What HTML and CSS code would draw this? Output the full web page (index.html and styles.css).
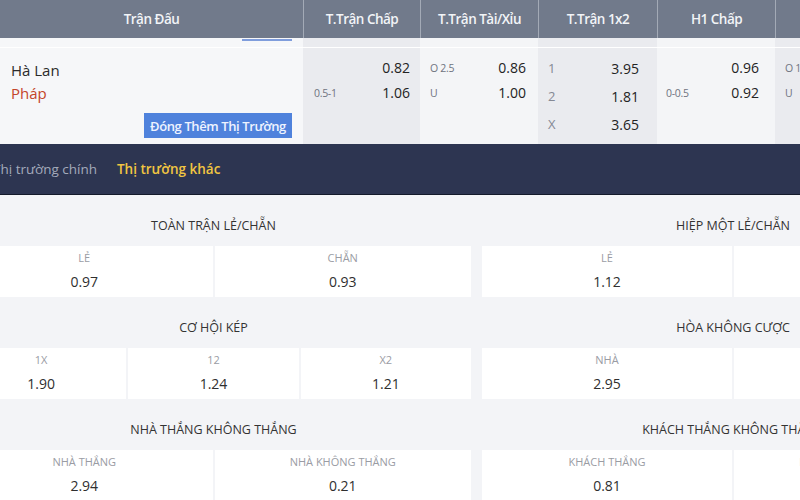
FILE: index.html
```html
<!DOCTYPE html>
<html lang="vi">
<head>
<meta charset="utf-8">
<title>Thị trường</title>
<link rel="stylesheet" href="styles.css">
</head>
<body>
<div class="page">
  <div class="table">
    <div class="grid hrow">
      <div class="hcell">Trận Đấu</div>
      <div class="hcell sep">T.Trận Chấp</div>
      <div class="hcell sep">T.Trận Tài/Xỉu</div>
      <div class="hcell sep">T.Trận 1x2</div>
      <div class="hcell sep">H1 Chấp</div>
      <div class="hcell sep">H1 Tài/Xỉu</div>
    </div>
    <div class="grid strip">
      <div class="col-a strip-first"><span class="uline"></span></div>
      <div class="col-b"></div>
      <div class="col-c"></div>
      <div class="col-b"></div>
      <div class="col-c"></div>
      <div class="col-b"></div>
    </div>
    <div class="grid mrow">
      <div class="col-a match">
        <div class="team home">Hà Lan</div>
        <div class="team away">Pháp</div>
        <div class="btnrow"><span class="more">Đóng Thêm Thị Trường</span></div>
      </div>
      <div class="col-b odds hdp">
        <div class="line"><span class="lbl"></span><span class="val">0.82</span></div>
        <div class="line"><span class="lbl">0.5-1</span><span class="val">1.06</span></div>
      </div>
      <div class="col-c odds ou">
        <div class="line"><span class="lbl">O 2.5</span><span class="val">0.86</span></div>
        <div class="line"><span class="lbl">U</span><span class="val">1.00</span></div>
      </div>
      <div class="col-b odds x12">
        <div class="line"><span class="lbl big">1</span><span class="val">3.95</span></div>
        <div class="line"><span class="lbl big">2</span><span class="val">1.81</span></div>
        <div class="line"><span class="lbl big">X</span><span class="val">3.65</span></div>
      </div>
      <div class="col-c odds h1">
        <div class="line"><span class="lbl"></span><span class="val">0.96</span></div>
        <div class="line"><span class="lbl">0-0.5</span><span class="val">0.92</span></div>
      </div>
      <div class="col-b odds h1ou">
        <div class="line"><span class="lbl">O 1</span><span class="val"></span></div>
        <div class="line"><span class="lbl">U</span><span class="val"></span></div>
      </div>
    </div>
  </div>

  <div class="lower">
    <div class="tabs">
      <span class="tab">Thị trường chính</span>
      <span class="tab active">Thị trường khác</span>
    </div>
    <div class="markets">
      <div class="market">
        <div class="mtitle">TOÀN TRẬN LẺ/CHẴN</div>
        <div class="cells two">
          <div class="cell"><div class="clbl">LẺ</div><div class="cval">0.97</div></div>
          <div class="cell"><div class="clbl">CHẴN</div><div class="cval">0.93</div></div>
        </div>
      </div>
      <div class="market">
        <div class="mtitle">HIỆP MỘT LẺ/CHẴN</div>
        <div class="cells two">
          <div class="cell"><div class="clbl">LẺ</div><div class="cval">1.12</div></div>
          <div class="cell"><div class="clbl">CHẴN</div><div class="cval"></div></div>
        </div>
      </div>
      <div class="market">
        <div class="mtitle">CƠ HỘI KÉP</div>
        <div class="cells three">
          <div class="cell"><div class="clbl">1X</div><div class="cval">1.90</div></div>
          <div class="cell"><div class="clbl">12</div><div class="cval">1.24</div></div>
          <div class="cell"><div class="clbl">X2</div><div class="cval">1.21</div></div>
        </div>
      </div>
      <div class="market">
        <div class="mtitle">HÒA KHÔNG CƯỢC</div>
        <div class="cells two">
          <div class="cell"><div class="clbl">NHÀ</div><div class="cval">2.95</div></div>
          <div class="cell"><div class="clbl">KHÁCH</div><div class="cval"></div></div>
        </div>
      </div>
      <div class="market">
        <div class="mtitle">NHÀ THẮNG KHÔNG THẮNG</div>
        <div class="cells two">
          <div class="cell"><div class="clbl">NHÀ THẮNG</div><div class="cval">2.94</div></div>
          <div class="cell"><div class="clbl">NHÀ KHÔNG THẮNG</div><div class="cval">0.21</div></div>
        </div>
      </div>
      <div class="market">
        <div class="mtitle">KHÁCH THẮNG KHÔNG THẮNG</div>
        <div class="cells two">
          <div class="cell"><div class="clbl">KHÁCH THẮNG</div><div class="cval">0.81</div></div>
          <div class="cell"><div class="clbl">KHÁCH KHÔNG THẮNG</div><div class="cval"></div></div>
        </div>
      </div>
    </div>
  </div>
</div>
</body>
</html>
```

FILE: styles.css
```css
* { box-sizing: border-box; }
html, body { margin: 0; padding: 0; }
body {
  width: 800px;
  height: 500px;
  overflow: hidden;
  background: #f3f4f7;
  font-family: "Open Sans", "Liberation Sans", sans-serif;
  color: #2a2a2a;
}
.page { width: 800px; height: 500px; overflow: hidden; }

.table { width: 800px; overflow: hidden; }
.grid {
  display: grid;
  grid-template-columns: 303px 117px 118px 119px 118px 117px;
  width: 892px;
}

/* header */
.hrow { height: 38px; background: #717a8b; }
.hcell {
  display: flex;
  align-items: center;
  justify-content: center;
  color: #f2f4f7;
  font-size: 13.5px;
  font-weight: 600;
  letter-spacing: -0.5px;
}
.hcell.sep { border-left: 1px solid #a3aab6; }

/* cut-off previous row strip */
.strip { height: 9px; }
.strip-first { position: relative; }
.uline {
  position: absolute;
  left: 242px;
  top: 1px;
  width: 50px;
  height: 2px;
  background: #7f9ddc;
}

.col-a { background: #f6f7f9; }
.col-b { background: #eaebef; }
.col-c { background: #f4f5f7; }

/* main row */
.mrow { height: 97px; border-top: 1px solid #ffffff; }
.match { padding: 11px 11px 0 11px; }
.team { font-size: 15px; line-height: 23px; }
.home { color: #2b2b2b; }
.away { color: #c4452a; }
.btnrow { display: flex; justify-content: flex-end; margin-top: 8px; }
.more {
  display: flex;
  align-items: center;
  justify-content: center;
  width: 148px;
  height: 25px;
  background: #4f82dc;
  color: #eef3ff;
  font-size: 13px;
  font-weight: 600;
  letter-spacing: -0.4px;
}

.odds { padding-top: 7px; }
.line {
  display: flex;
  justify-content: space-between;
  align-items: center;
  height: 25px;
}
.lbl { font-size: 10.5px; color: #6f7380; letter-spacing: -0.3px; }
.lbl.big { font-size: 13px; color: #858994; }
.val { font-size: 14px; color: #232323; }

.hdp { padding-left: 11px; padding-right: 10px; }
.ou { padding-left: 10px; padding-right: 12px; }
.x12 { padding-left: 10px; padding-right: 18px; padding-top: 6px; }
.x12 .line { height: 28px; }
.h1 { padding-left: 9px; padding-right: 16px; }
.h1ou { padding-left: 10px; padding-right: 12px; }

/* lower section */
.lower { margin-left: -44px; width: 1100px; }
.tabs {
  height: 51px;
  background: #2d3551;
  border-bottom: 1px solid #141a2b;
  display: flex;
  align-items: center;
  gap: 20px;
  padding-left: 37px;
  padding-bottom: 1px;
}
.tab { font-size: 13.5px; color: #a4aabb; }
.tab.active { color: #f1c541; font-weight: 600; }

.markets {
  display: grid;
  grid-template-columns: 515px 502px;
  column-gap: 11px;
}
.market { padding-top: 21px; }
.mtitle {
  text-align: center;
  font-size: 12.5px;
  line-height: 20px;
  color: #333;
  margin-bottom: 10px;
}
.cells { display: grid; gap: 2px; }
.cells.two { grid-template-columns: 1fr 1fr; }
.cells.three { grid-template-columns: 1fr 1fr 1fr; }
.cell {
  background: #ffffff;
  height: 51px;
  text-align: center;
  padding-top: 4px;
}
.clbl { font-size: 11px; line-height: 16px; color: #9a9ca4; }
.cval { font-size: 14px; line-height: 20px; margin-top: 6px; color: #2f2f2f; }
```
